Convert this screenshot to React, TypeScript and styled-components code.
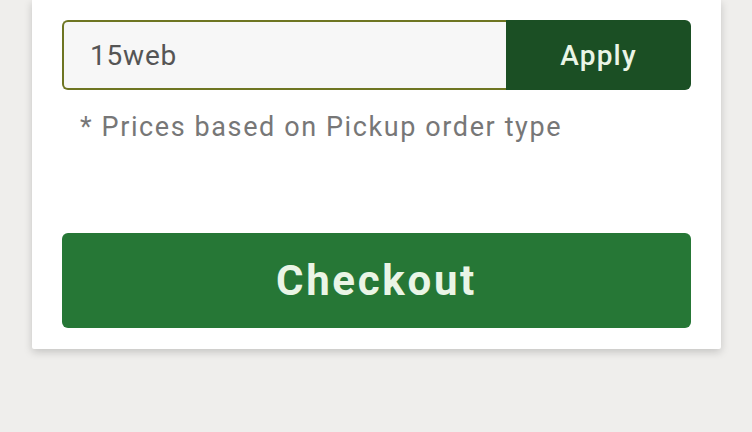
import styled, { createGlobalStyle } from "styled-components";

const GlobalStyle = createGlobalStyle`
  html, body {
    margin: 0;
    padding: 0;
    background: #efeeec;
    font-family: Roboto, "Liberation Sans", sans-serif;
  }
`;

const Page = styled.div`
  width: 752px;
  height: 432px;
  overflow: hidden;
  padding: 0 31px 0 32px;
  box-sizing: border-box;
`;

const Card = styled.div`
  background: #ffffff;
  padding: 20px 30px 21px;
  box-shadow: 0 3px 8px rgba(0, 0, 0, 0.18);
  border-radius: 0 0 2px 2px;
`;

const CouponRow = styled.div`
  display: flex;
  height: 70px;
`;

const CouponInput = styled.input`
  flex: 1;
  min-width: 0;
  box-sizing: border-box;
  height: 100%;
  border: 2px solid #6e7522;
  border-right: none;
  border-radius: 6px 0 0 6px;
  background: #f7f7f7;
  padding: 0 0 0 26px;
  font-family: Roboto, "Liberation Sans", sans-serif;
  font-size: 28px;
  letter-spacing: 0.8px;
  color: #555555;
  outline: none;
`;

const ApplyButton = styled.button`
  width: 185px;
  border: none;
  border-radius: 0 6px 6px 0;
  background: #1b4f24;
  color: #eaf5e6;
  font-family: Roboto, "Liberation Sans", sans-serif;
  font-weight: 500;
  font-size: 28px;
  letter-spacing: 1.2px;
  cursor: pointer;
`;

const Note = styled.p`
  margin: 0;
  padding: 21px 0 0 18px;
  font-size: 27px;
  line-height: 32px;
  letter-spacing: 1.6px;
  color: #777777;
`;

const CheckoutButton = styled.button`
  display: block;
  width: 100%;
  height: 95px;
  margin-top: 90px;
  border: none;
  border-radius: 6px;
  background: #267736;
  color: #eaf5e6;
  font-family: Roboto, "Liberation Sans", sans-serif;
  font-weight: 700;
  font-size: 42px;
  letter-spacing: 2.7px;
  cursor: pointer;
`;

export default function App() {
  return (
    <>
      <GlobalStyle />
      <Page>
        <Card>
          <CouponRow>
            <CouponInput defaultValue="15web" />
            <ApplyButton>Apply</ApplyButton>
          </CouponRow>
          <Note>* Prices based on Pickup order type</Note>
          <CheckoutButton>Checkout</CheckoutButton>
        </Card>
      </Page>
    </>
  );
}
